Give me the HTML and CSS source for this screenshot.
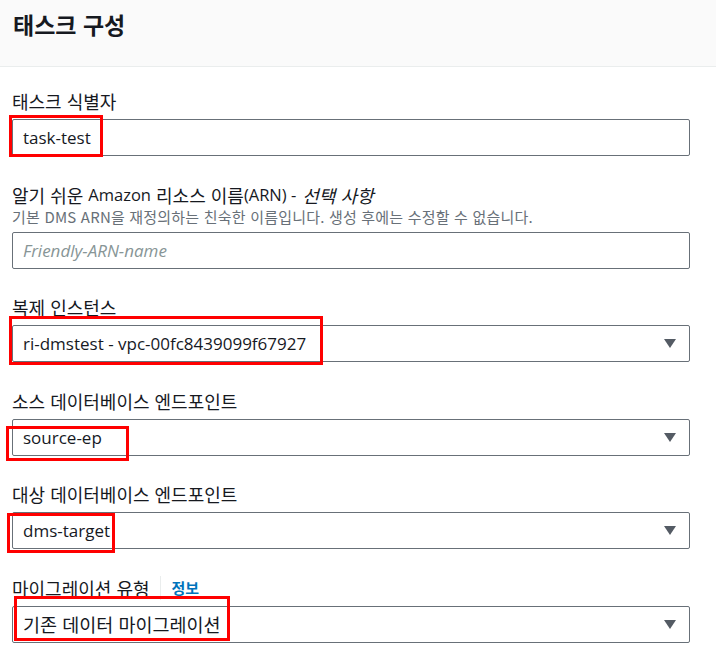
FILE: index.html
```html
<!DOCTYPE html>
<html lang="ko">
<head>
<meta charset="utf-8">
<link rel="stylesheet" href="styles.css">
</head>
<body>
<div class="panel">
  <div class="header"><h2 class="title">태스크 구성</h2></div>
  <div class="content">
    <div class="field">
      <div class="label">태스크 식별자</div>
      <div class="control">
        <div class="input"><span class="value">task-test</span></div>
        <div class="mark mark1"></div>
      </div>
    </div>
    <div class="field">
      <div class="label">알기 쉬운&nbsp;<span class="latin">Amazon</span>&nbsp;리소스 이름<span class="latin">(ARN) -</span><i>선택 사항</i></div>
      <div class="desc">기본 DMS ARN을 재정의하는 친숙한 이름입니다. 생성 후에는 수정할 수 없습니다.</div>
      <div class="control">
        <div class="input"><span class="placeholder">Friendly-ARN-name</span></div>
      </div>
    </div>
    <div class="field">
      <div class="label">복제 인스턴스</div>
      <div class="control">
        <div class="input select"><span class="value">ri-dmstest - vpc-00fc8439099f67927</span><span class="caret"></span></div>
        <div class="mark mark3"></div>
      </div>
    </div>
    <div class="field">
      <div class="label">소스 데이터베이스 엔드포인트</div>
      <div class="control">
        <div class="input select"><span class="value">source-ep</span><span class="caret"></span></div>
        <div class="mark mark4"></div>
      </div>
    </div>
    <div class="field">
      <div class="label">대상 데이터베이스 엔드포인트</div>
      <div class="control">
        <div class="input select"><span class="value">dms-target</span><span class="caret"></span></div>
        <div class="mark mark5"></div>
      </div>
    </div>
    <div class="field">
      <div class="label">마이그레이션 유형<span class="divider"></span><a class="info">정보</a></div>
      <div class="control">
        <div class="input select"><span class="value ko">기존 데이터 마이그레이션</span><span class="caret"></span></div>
        <div class="mark mark6"></div>
      </div>
    </div>
  </div>
</div>
</body>
</html>
```

FILE: styles.css
```css
html, body {
  margin: 0;
  padding: 0;
  background: #ffffff;
}
body {
  font-family: "Open Sans", "Noto Sans CJK KR", sans-serif;
  color: #16191f;
}
.panel {
  width: 716px;
}
.header {
  background: #fafafa;
  border-bottom: 1px solid #eaeded;
  height: 67px;
  box-sizing: border-box;
  padding: 8px 13px 0;
}
.title {
  margin: 0;
  font-size: 23px;
  font-weight: 700;
  line-height: 32px;
  font-family: "Noto Sans CJK KR", sans-serif;
}
.content {
  padding: 23px 26px 0 12px;
  display: flex;
  flex-direction: column;
  gap: 27.5px;
}
.field {
  display: flex;
  flex-direction: column;
}
.label {
  font-size: 18px;
  line-height: 22px;
  height: 22px;
  margin-bottom: 7px;
  display: flex;
  align-items: center;
  font-family: "Noto Sans CJK KR", sans-serif;
  font-weight: 400;
  white-space: pre;
}
.latin {
  font-family: "Open Sans", sans-serif;
  font-size: 16.5px;
}
.label i {
  font-style: italic;
  margin-left: 6px;
}
.desc {
  font-size: 15px;
  line-height: 18px;
  letter-spacing: 0.2px;
  color: #687078;
  margin-top: -5px;
  margin-bottom: 6px;
  font-family: "Noto Sans CJK KR", sans-serif;
}
.control {
  position: relative;
}
.input {
  height: 37px;
  box-sizing: border-box;
  border: 1px solid #687078;
  border-radius: 2px;
  display: flex;
  align-items: center;
  padding: 0 12px 0 10px;
  font-size: 17px;
  background: #fff;
}
.value {
  color: #16191f;
  white-space: nowrap;
}
.value.ko {
  font-family: "Noto Sans CJK KR", sans-serif;
  font-size: 18.5px;
}
.placeholder {
  color: #879596;
  font-style: italic;
}
.select {
  justify-content: space-between;
}
.caret {
  width: 0;
  height: 0;
  border-left: 6px solid transparent;
  border-right: 6px solid transparent;
  border-top: 9px solid #545b64;
  margin-right: 1px;
}
.divider {
  display: inline-block;
  width: 1px;
  height: 24px;
  background: #eaeded;
  margin: 0 11px 0 10px;
}
.info {
  color: #0073bb;
  font-weight: 700;
  font-size: 15px;
}
.mark {
  position: absolute;
  border: 3px solid #ff0000;
  box-sizing: border-box;
  pointer-events: none;
}
.mark1 { left: -3px; top: -4px; width: 94px; height: 42px; }
.mark3 { left: -3px; top: -9px; width: 314px; height: 49px; }
.mark4 { left: -6px; top: 7px; width: 123px; height: 35px; }
.mark5 { left: -5px; top: 1px; width: 108px; height: 40px; }
.mark6 { left: 2px; top: -10px; width: 216px; height: 45px; }
```
